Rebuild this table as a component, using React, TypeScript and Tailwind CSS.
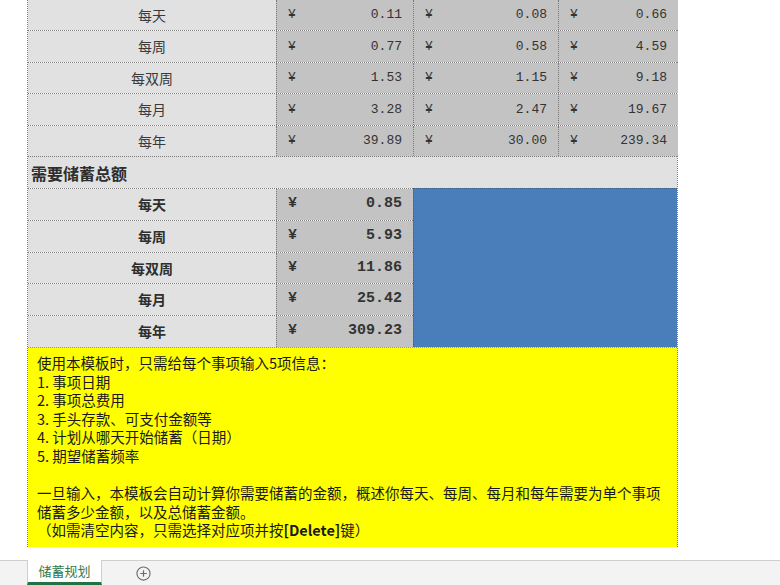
import React from "react";

const cjk = { fontFamily: '"Noto Sans CJK SC", "Noto Sans", sans-serif' };
const mono = { fontFamily: '"Liberation Mono", "Noto Sans CJK SC", monospace' };

type Row = { label: string; h: string; vals: string[] };

const topRows: Row[] = [
  { label: "每天", h: "h-[30px]", vals: ["0.11", "0.08", "0.66"] },
  { label: "每周", h: "h-[32px]", vals: ["0.77", "0.58", "4.59"] },
  { label: "每双周", h: "h-[31px]", vals: ["1.53", "1.15", "9.18"] },
  { label: "每月", h: "h-[32px]", vals: ["3.28", "2.47", "19.67"] },
  { label: "每年", h: "h-[31px]", vals: ["39.89", "30.00", "239.34"] },
];

const totalRows: Row[] = [
  { label: "每天", h: "h-[32px]", vals: ["0.85"] },
  { label: "每周", h: "h-[32px]", vals: ["5.93"] },
  { label: "每双周", h: "h-[31px]", vals: ["11.86"] },
  { label: "每月", h: "h-[32px]", vals: ["25.42"] },
  { label: "每年", h: "h-[32px]", vals: ["309.23"] },
];

function ValCell({ v, w, bold }: { v: string; w: string; bold?: boolean }) {
  return (
    <div
      className={`${w} shrink-0 flex items-center justify-between pl-[11px] pr-[11px] bg-[#c3c3c3] text-[#333] border-l border-dotted border-[#7a7a7a] ${bold ? "font-bold text-[15px] text-[#2a2a2a]" : "text-[13px]"}`}
      style={mono}
    >
      <span>¥</span>
      <span>{v}</span>
    </div>
  );
}

export default function App() {
  return (
    <div className="w-[780px] h-[585px] bg-white overflow-hidden flex flex-col relative">
      <div className="pl-[27px] flex flex-col">
        <div className="w-[651px] border-l border-r border-dotted border-[#7a7a7a] flex flex-col">
          {topRows.map((r, i) => (
            <div
              key={i}
              className={`${r.h} flex ${i === 0 ? "" : "border-t border-dotted border-[#7a7a7a]"}`}
            >
              <div
                className="w-[248px] shrink-0 flex items-center justify-center bg-[#e1e1e1] text-[14px] text-[#3a3a3a]"
                style={cjk}
              >
                {r.label}
              </div>
              <ValCell v={r.vals[0]} w="w-[137px]" />
              <ValCell v={r.vals[1]} w="w-[145px]" />
              <ValCell v={r.vals[2]} w="w-[120px]" />
            </div>
          ))}
          <div
            className="h-[32px] flex items-center bg-[#e1e1e1] border-t border-dotted border-[#7a7a7a] pl-[3px] text-[16px] font-bold text-[#2e2e2e]"
            style={cjk}
          >
            需要储蓄总额
          </div>
          <div className="flex">
            <div className="flex flex-col">
              {totalRows.map((r, i) => (
                <div key={i} className={`${r.h} flex border-t border-dotted border-[#7a7a7a]`}>
                  <div
                    className="w-[248px] shrink-0 flex items-center justify-center bg-[#e1e1e1] text-[14px] font-bold text-[#2e2e2e]"
                    style={cjk}
                  >
                    {r.label}
                  </div>
                  <ValCell v={r.vals[0]} w="w-[137px]" bold />
                </div>
              ))}
            </div>
            <div className="flex-1 bg-[#4a7ebb] border-t border-l border-dotted border-[#3a5f8a]" />
          </div>
          <div
            className="h-[200px] bg-[#ffff00] border-t border-dotted border-[#9a9a4a] pl-[9px] pt-[6px] text-[14.5px] leading-[18.6px] text-[#1a1a1a] whitespace-nowrap"
            style={cjk}
          >
            <div>使用本模板时，只需给每个事项输入5项信息：</div>
            <div>1. 事项日期</div>
            <div>2. 事项总费用</div>
            <div>3. 手头存款、可支付金额等</div>
            <div>4. 计划从哪天开始储蓄（日期）</div>
            <div>5. 期望储蓄频率</div>
            <div>&nbsp;</div>
            <div>一旦输入，本模板会自动计算你需要储蓄的金额，概述你每天、每周、每月和每年需要为单个事项</div>
            <div>储蓄多少金额，以及总储蓄金额。</div>
            <div>
              （如需清空内容，只需选择对应项并按
              <span className="font-bold">[Delete]</span>
              键）
            </div>
          </div>
        </div>
      </div>
      <div className="flex-1" />
      <div className="h-[25px] bg-[#f3f3f3] border-t border-[#cfcfcf] flex items-stretch">
        <div className="w-[27px]" />
        <div
          className="w-[75px] -mt-[1px] bg-white border-l border-r border-[#cfcfcf] border-b-[3px] border-b-[#217346] flex items-center justify-center text-[13px] text-[#2f7a4f]"
          style={cjk}
        >
          储蓄规划
        </div>
        <div className="w-[34px]" />
        <div className="flex items-center">
          <svg width="15" height="15" viewBox="0 0 16 16">
            <circle cx="8" cy="8" r="7" fill="none" stroke="#6b6b6b" strokeWidth="1.2" />
            <path d="M8 4.5v7M4.5 8h7" stroke="#6b6b6b" strokeWidth="1.3" />
          </svg>
        </div>
      </div>
    </div>
  );
}
